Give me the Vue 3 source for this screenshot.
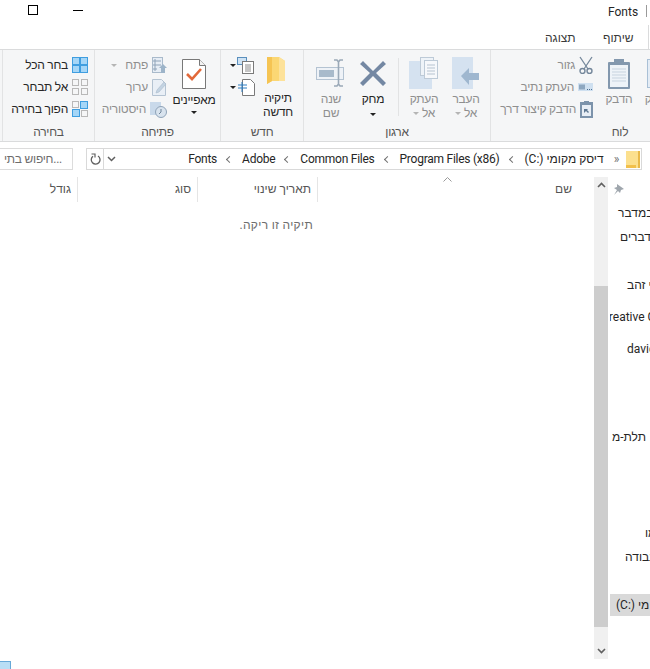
<script setup>
const navRows = [
  { h: 24, t: 'במדבר', pad: 8 },
  { h: 24, t: 'בדברים', pad: 10 },
  { h: 24, t: '', pad: 0 },
  { h: 32, t: 'ריאתי זהב', pad: 17 },
  { h: 32, t: 'Creative Cloud', pad: 0, shift: -9 },
  { h: 88, t: 'david', pad: 17 },
  { h: 96, t: 'תלת-מ', pad: 2 },
  { h: 24, t: 'מו', pad: 35 },
  { h: 48, t: 'עבודה', pad: 15 },
  { h: 22, t: '(C:) מי', pad: 6, sel: true },
]
</script>

<template>
  <div class="win">
    <header class="title">
      <span class="ctl-max"></span>
      <span class="ctl-min"></span>
      <span class="title-text">Fonts</span>
      <span class="title-sep"></span>
    </header>
    <nav class="tabs">
      <span class="tab view">תצוגה</span>
      <span class="tab share">שיתוף</span>
      <span class="tab-edge"></span>
    </nav>

    <section class="ribbon">
      <div class="group g-select">
        <div class="items col-right">
          <div class="small"><span>בחר הכל</span>
            <svg width="16" height="16" viewBox="0 0 16 16"><rect width="16" height="16" fill="#3f9ee0"/><rect x="1" y="1" width="6" height="6" fill="#a5d6f7"/><rect x="9" y="1" width="6" height="6" fill="#a5d6f7"/><rect x="1" y="9" width="6" height="6" fill="#a5d6f7"/><rect x="9" y="9" width="6" height="6" fill="#a5d6f7"/></svg>
          </div>
          <div class="small"><span>אל תבחר</span>
            <svg width="16" height="16" viewBox="0 0 16 16" fill="none" stroke="#b8b8b8"><rect x=".5" y=".5" width="6" height="6"/><rect x="9.5" y=".5" width="6" height="6"/><rect x=".5" y="9.5" width="6" height="6"/><rect x="9.5" y="9.5" width="6" height="6"/></svg>
          </div>
          <div class="small"><span>הפוך בחירה</span>
            <svg width="16" height="16" viewBox="0 0 16 16"><rect x=".5" y=".5" width="6" height="6" fill="none" stroke="#b8b8b8"/><rect x="8" width="8" height="8" fill="#3f9ee0"/><rect x="9" y="1" width="6" height="6" fill="#a5d6f7"/><rect y="8" width="8" height="8" fill="#3f9ee0"/><rect x="1" y="9" width="6" height="6" fill="#a5d6f7"/><rect x="9.5" y="9.5" width="6" height="6" fill="none" stroke="#b8b8b8"/></svg>
          </div>
        </div>
        <div class="label">בחירה</div>
      </div>

      <div class="group g-open">
        <div class="items row">
          <div class="col-right open-list dim">
            <div class="small"><i class="caret light"></i><span>פתח</span>
              <svg width="15" height="17" viewBox="0 0 15 17"><rect x=".5" y=".5" width="10" height="15" fill="#e6edf5" stroke="#a9bacb"/><path d="M2 3h2v2H2zM2 7h2v2H2zM2 11h2v2H2zM5 4h4M5 8h4" stroke="#8fa3b8" fill="none"/><path d="M11 7l4 4h-2v5h-4v-5H7z" fill="#9db4c9"/></svg>
            </div>
            <div class="small"><span>ערוך</span>
              <svg width="15" height="17" viewBox="0 0 15 17"><path d="M.5.5h9l4 4v12H.5z" fill="#e9eff6" stroke="#b4c3d2"/><path d="M4 14l1-3 7-8 2 2-7 8z" fill="#c3d3e2" stroke="#a9bacb" stroke-width=".6"/></svg>
            </div>
            <div class="small"><span>היסטוריה</span>
              <svg width="17" height="17" viewBox="0 0 17 17"><rect y="1" width="11" height="13" fill="#c9d9ea"/><circle cx="11" cy="11" r="5.5" fill="#d8e3ee" stroke="#8fa3b8"/><path d="M11 8v3l-2 2" stroke="#6f8499" fill="none"/></svg>
            </div>
          </div>
          <div class="big props">
            <svg width="24" height="30" viewBox="0 0 24 30"><path d="M.5.5h17l6 6v23H.5z" fill="#fff" stroke="#787878"/><path d="M17.5.5v6h6" fill="#f2f2f2" stroke="#787878"/><path d="M5 15l5 5 9-10" fill="none" stroke="#e2693a" stroke-width="2.6"/></svg>
            <span class="big-text">מאפיינים</span>
            <i class="caret"></i>
          </div>
        </div>
        <div class="label">פתיחה</div>
      </div>

      <div class="group g-new">
        <div class="items row">
          <div class="new-small">
            <div class="ns"><i class="caret"></i>
              <svg width="17" height="17" viewBox="0 0 17 17"><rect x=".5" y=".5" width="9" height="7" fill="#cfe3f4" stroke="#5a8fbd"/><rect x="5.5" y="4.5" width="11" height="12" fill="#fff" stroke="#7a7a7a"/><path d="M8 8h6M8 10h6M8 12h6M8 14h6" stroke="#8a8a8a"/></svg>
            </div>
            <div class="ns"><i class="caret"></i>
              <svg width="18" height="17" viewBox="0 0 18 17"><path d="M5.500.5h8l4 4v12h-12z" fill="#fff" stroke="#7a7a7a"/><path d="M1 6h9M1 9h9M5 3v10" stroke="#2d7cc1" fill="none"/></svg>
            </div>
          </div>
          <div class="big newfolder">
            <svg width="20" height="28" viewBox="0 0 20 28"><path d="M1 0h12l6 4v20H6l-5 3z" fill="#fbd774"/><path d="M1 0h5v24l-5 3z" fill="#f5c453"/><path d="M13 0l6 4v20h-6z" fill="#fde29a"/></svg>
            <span class="big-text">תיקיה<br>חדשה</span>
          </div>
        </div>
        <div class="label">חדש</div>
      </div>

      <div class="group g-org">
        <div class="items row">
          <div class="big org dim">
            <svg width="30" height="28" viewBox="0 0 30 28"><rect x=".5" y="8.500" width="27" height="12" fill="#eef2f7" stroke="#b4c3d2"/><rect x="3" y="11" width="15" height="7" fill="#a8bacb"/><path d="M18 1h3l1.500 2L24 1h3M22.500 3v22M18 27h3l1.500-2 1.500 2h3" fill="none" stroke="#9aa9b8" stroke-width="1.600"/></svg>
            <span class="big-text">שנה<br>שם</span>
          </div>
          <div class="big org">
            <svg width="26" height="28" viewBox="0 0 26 28"><path d="M3 2l10 10L23 2l3 3-10 9 10 10-3 3-10-10L3 27l-3-3 10-10L0 5z" fill="#7488a3"/></svg>
            <span class="big-text">מחק</span>
            <i class="caret"></i>
          </div>
          <div class="vsep"></div>
          <div class="big org dim">
            <svg width="30" height="32" viewBox="0 0 30 32"><rect y="4" width="23" height="28" fill="#d5e2f0"/><rect x="11.500" y=".5" width="13" height="18" fill="#eef3f8" stroke="#bdcad7"/><rect x="15.500" y="3.500" width="13" height="18" fill="#f6f8fb" stroke="#bdcad7"/><path d="M18 8h8M18 11h8M18 14h8M18 17h8" stroke="#b6c3d0"/></svg>
            <span class="big-text">העתק<br><i class="caret light inl"></i>אל</span>
          </div>
          <div class="big org dim">
            <svg width="28" height="32" viewBox="0 0 28 32"><rect width="21" height="32" fill="#d5e2f0"/><path d="M9 19l8-8v5h10v7H17v5z" fill="#9fb7cf"/></svg>
            <span class="big-text">העבר<br><i class="caret light inl"></i>אל</span>
          </div>
        </div>
        <div class="label">ארגון</div>
      </div>

      <div class="group g-clip">
        <div class="items row">
          <div class="col-right clip-list dim">
            <div class="small"><span>גזור</span>
              <svg width="14" height="18" viewBox="0 0 14 18" fill="none" stroke="#74879b"><path d="M1 1l8 12M13 1L5 13" stroke-width="1.300"/><circle cx="3.500" cy="15" r="2.500" stroke-width="1.400"/><circle cx="10.500" cy="15" r="2.500" stroke-width="1.400"/></svg>
            </div>
            <div class="small"><span>העתק נתיב</span>
              <svg width="15" height="8" viewBox="0 0 15 8"><rect width="15" height="8" fill="#cfe0f0"/><path d="M2 1.500v5M4 1.500v5M6 1.500v5M9 6.500h1M11 6.500h1M13 6.500h1" stroke="#4d6e90"/></svg>
            </div>
            <div class="small"><span>הדבק קיצור דרך</span>
              <svg width="13" height="17" viewBox="0 0 13 17"><rect y="1" width="13" height="16" fill="#7c93ab"/><rect x="2" y="4" width="9" height="11" fill="#e8eef5"/><rect x="4" width="5" height="3" fill="#7c93ab"/><path d="M4 12V8h4l-1 1 2 2-1 1-2-2z" fill="#5f7892"/></svg>
            </div>
          </div>
          <div class="big paste dim">
            <svg width="24" height="30" viewBox="0 0 24 30"><rect x="1" y="3" width="22" height="27" rx="1" fill="#8398ae"/><rect x="3" y="6" width="18" height="22" fill="#eef3f8"/><rect x="7" width="10" height="5" fill="#8398ae"/><path d="M5 10h14M5 13h14M5 16h14M5 19h14M5 22h14" stroke="#c7d3df"/></svg>
            <span class="big-text">הדבק</span>
          </div>
          <div class="big copy dim">
            <svg width="24" height="30" viewBox="0 0 24 30"><rect x=".5" y=".5" width="20" height="28" fill="#e4ecf5" stroke="#a9c0d6"/></svg>
            <span class="big-text">העתק</span>
          </div>
        </div>
        <div class="label">לוח</div>
      </div>
    </section>

    <div class="addr-row">
      <div class="search">חיפוש בתי...</div>
      <div class="addr">
        <div class="addr-tools">
          <svg class="refresh" width="11" height="12" viewBox="0 0 11 12" fill="none" stroke="#5f5f5f" stroke-width="1.300"><path d="M3 3.200A4.400 4.400 0 1 0 8 3"/><path d="M1.500 1h3.500v3.500" stroke-width="1.200"/></svg>
        </div>
        <svg class="drop" width="9" height="6" viewBox="0 0 9 6" fill="none" stroke="#5f5f5f" stroke-width="1.500"><path d="M1 1l3.500 3.500L8 1"/></svg>
        <div class="crumbs">
          <span>Fonts</span><i class="sep"></i>
          <span>Adobe</span><i class="sep"></i>
          <span>Common Files</span><i class="sep"></i>
          <span>Program Files (x86)</span><i class="sep"></i>
          <span class="drive">(C:) דיסק מקומי</span>
          <span class="more">»</span>
          <svg class="addr-folder" width="14" height="17" viewBox="0 0 14 17"><path d="M0 0h14v17H0z" fill="#fce08e"/><path d="M0 14h10v3H0z" fill="#f2c04c"/><path d="M12 0h2v17h-2z" fill="#e9b949"/></svg>
        </div>
      </div>
    </div>

    <div class="body">
      <main class="files">
        <div class="heads">
          <div class="head w-size">גודל</div>
          <div class="head w-type">סוג</div>
          <div class="head w-date">תאריך שינוי</div>
          <div class="head w-name">
            <svg class="sort" width="9" height="5" viewBox="0 0 9 5" fill="none" stroke="#9a9a9a"><path d="M.5 4.500l4-4 4 4"/></svg>
            שם
          </div>
        </div>
        <p class="empty">תיקיה זו ריקה.</p>
      </main>
      <div class="scroll">
        <svg class="arrow" width="9" height="6" viewBox="0 0 9 6" fill="none" stroke="#606060" stroke-width="1.600"><path d="M1 5l3.500-3.500L8 5"/></svg>
        <div class="track"><div class="thumb"></div></div>
        <svg class="arrow" width="9" height="6" viewBox="0 0 9 6" fill="none" stroke="#606060" stroke-width="1.600"><path d="M1 1l3.500 3.500L8 1"/></svg>
      </div>
      <aside class="nav">
        <svg class="pin" width="12" height="12" viewBox="0 0 12 12"><path d="M4 0l7 5-3 1-1 3-2-2-4 4 3-5-3-2 3-1z" fill="#9fa6ad"/></svg>
        <div
          v-for="(r, i) in navRows"
          :key="i"
          class="nav-row"
          :class="{ sel: r.sel }"
          :style="{ height: r.h + 'px', paddingLeft: r.pad + 'px' }"
        >
          <span :style="{ marginLeft: (r.shift || 0) + 'px' }">{{ r.t }}</span>
        </div>
      </aside>
    </div>
    <div class="corner"></div>
  </div>
</template>

<style>
html, body { margin: 0; background: #fff; overflow: hidden; }
</style>

<style scoped>
.win {
  width: 650px; height: 669px; overflow: hidden; background: #fff; position: relative;
  font: 12px/16px Roboto, "Liberation Sans", sans-serif; color: #262626;
}
.title { height: 25px; display: flex; align-items: flex-start; }
.ctl-max { width: 8px; height: 8px; border: 1px solid #000; margin: 5px 0 0 28px; }
.ctl-min { width: 10px; height: 1px; background: #000; margin: 10px 0 0 35px; }
.title-text { margin: 4px 0 0 525px; }
.title-sep { width: 1px; height: 12px; background: #9a9a9a; margin: 5px 0 0 8px; }
.tabs { height: 24px; border-bottom: 1px solid #dadbdc; display: flex; align-items: center; position: relative; box-sizing: content-box; }
.tab { position: absolute; top: 5px; color: #3a3a3a; }
.tab.view { left: 545px; }
.tab.share { left: 603px; }
.tab-edge { position: absolute; left: 648px; top: 0; bottom: -1px; width: 1px; background: #dadbdc; }

.ribbon { display: flex; height: 91px; background: #f5f6f7; border-bottom: 1px solid #dadbdc; padding-left: 2px; box-sizing: content-box; letter-spacing: -0.25px; }
.group { flex: none; display: flex; flex-direction: column; border-left: 1px solid #e2e3e4; box-sizing: border-box; }
.g-select { width: 92px; }
.g-open { width: 126px; }
.g-new { width: 83px; }
.g-org { width: 187px; }
.g-clip { width: 259px; }
.items { height: 73px; padding-top: 4px; box-sizing: border-box; }
.label { text-align: center; color: #555; line-height: 18px; }
.row { display: flex; align-items: flex-start; }
.col-right { display: flex; flex-direction: column; align-items: flex-end; }
.g-select .items { padding-right: 6px; padding-top: 4px; }
.small { height: 22px; display: flex; align-items: center; justify-content: flex-end; gap: 4px; white-space: nowrap; }
.small svg { flex: none; }
.dim { color: #8f8f8f; }
.caret { display: inline-block; width: 0; height: 0; border: 3px solid transparent; border-top: 3px solid #222; border-bottom: 0; }
.caret.light { border-top-color: #b5b5b5; margin-right: 4px; }
.caret.inl { vertical-align: 2px; margin: 0 3px 0 0; }
.open-list { width: 72px; flex: none; }
.big { display: flex; flex-direction: column; align-items: center; text-align: center; flex: none; }
.big svg { height: 32px; }
.big-text { line-height: 14px; white-space: nowrap; }
.props { width: 42px; margin-left: 6px; }
.props svg { margin-top: 5px; margin-bottom: 3px; height: 30px; }
.props .big-text { line-height: 16px; margin-bottom: 3px; }
.new-small { margin: 0 0 0 9px; width: 30px; flex: none; }
.ns { height: 22px; display: flex; align-items: center; gap: 1px; }
.newfolder { width: 36px; }
.newfolder svg { margin: 3px 4px 6px 0; height: 28px; }
.g-org .items { padding-left: 6px; }
.org { width: 42px; }
.org svg { margin-bottom: 3px; margin-top: 3px; }
.vsep { width: 1px; height: 58px; background: #e2e3e4; margin: 4px 4px 0 4px; flex: none; }
.org > .caret { margin-top: 7px; }
.clip-list { width: 102px; flex: none; }
.paste { width: 30px; margin-left: 11px; }
.paste svg { margin-bottom: 2px; margin-top: 4px; }
.copy { width: 30px; margin-left: 10px; }
.copy svg { margin-top: 4px; margin-bottom: 2px; }

.addr-row { display: flex; height: 22px; margin-top: 6px; letter-spacing: -0.25px; }
.search { width: 73px; border: 1px solid #dcdcdc; border-left: 0; box-sizing: border-box; color: #6d6d6d; text-align: right; padding: 2px 10px 0 0; margin-right: 13px; white-space: nowrap; overflow: hidden; }
.addr { width: 556px; flex: none; border: 1px solid #d9d9d9; box-sizing: border-box; display: flex; align-items: center; }
.addr-tools { width: 16px; height: 100%; border-right: 1px solid #d9d9d9; display: flex; align-items: center; justify-content: center; flex: none; }
.drop { margin-left: 3px; flex: none; }
.crumbs { flex: 1; display: flex; align-items: center; justify-content: flex-end; gap: 10px; padding-right: 1px; white-space: nowrap; }
.drive { letter-spacing: 0; }
.sep { width: 4px; height: 4px; border-left: 1px solid #707070; border-bottom: 1px solid #707070; transform: rotate(45deg); flex: none; }
.more { color: #707070; margin: 0 -3px 0 0; }
.addr-folder { flex: none; }

.body { display: flex; height: 492px; margin-top: 7px; }
.files { width: 594px; flex: none; }
.heads { height: 25px; display: flex; }
.head { text-align: right; padding: 4px 6px 0 0; box-sizing: border-box; border-right: 1px solid #e5e5e5; flex: none; position: relative; color: #555; }
.w-size { width: 78px; }
.w-type { width: 120px; }
.w-date { width: 120px; }
.w-name { width: 276px; border-right: 0; padding-right: 22px; }
.sort { position: absolute; left: 125px; top: 0; }
.empty { margin: 15px 0 0; width: 319px; box-sizing: border-box; padding-right: 6px; text-align: right; color: #6d6d6d; direction: rtl; letter-spacing: 0.3px; }
.scroll { width: 14px; flex: none; height: 482px; background: #f0f0f0; display: flex; flex-direction: column; align-items: center; }
.arrow { flex: none; margin: 5px 0; }
.track { flex: 1; width: 100%; padding-top: 93px; box-sizing: border-box; }
.thumb { height: 341px; background: #cdcdcd; }
.nav { flex: 1; margin-left: 2px; overflow: hidden; position: relative; padding-top: 28px; }
.pin { position: absolute; left: 3px; top: 7px; }
.nav-row { display: flex; align-items: flex-start; white-space: nowrap; box-sizing: border-box; overflow: hidden; }
.nav-row span { flex: none; }
.nav-row.sel { background: #d9d9d9; align-items: center; margin-top: -3px; }
.corner { position: absolute; left: 0; top: 661px; width: 11px; height: 8px; background: #b9def5; border: 1px solid #67a9d8; border-left: 0; border-bottom: 0; box-sizing: border-box; }
</style>
